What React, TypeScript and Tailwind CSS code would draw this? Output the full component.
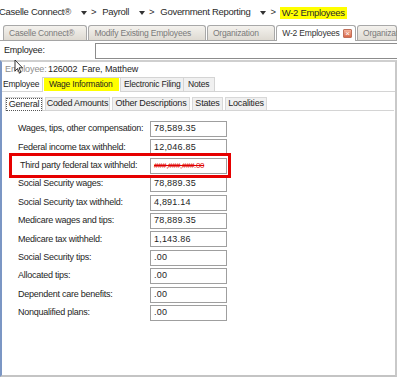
import React from 'react';

type Field = { label: string; value: string; flagged?: boolean };

const fields: Field[] = [
  { label: 'Wages, tips, other compensation:', value: '78,589.35' },
  { label: 'Federal income tax withheld:', value: '12,046.85' },
  { label: 'Third party federal tax withheld:', value: '###,###,###.00', flagged: true },
  { label: 'Social Security wages:', value: '78,889.35' },
  { label: 'Social Security tax withheld:', value: '4,891.14' },
  { label: 'Medicare wages and tips:', value: '78,889.35' },
  { label: 'Medicare tax withheld:', value: '1,143.86' },
  { label: 'Social Security tips:', value: '.00' },
  { label: 'Allocated tips:', value: '.00' },
  { label: 'Dependent care benefits:', value: '.00' },
  { label: 'Nonqualified plans:', value: '.00' },
];

const topTabs = [
  { label: 'Caselle Connect®', w: 'w-[89px]' },
  { label: 'Modify Existing Employees', w: 'w-[124px]' },
  { label: 'Organization', w: 'w-[72px]' },
];

const subTabs = [
  { label: 'Coded Amounts', w: 'w-[65px]' },
  { label: 'Other Descriptions', w: 'w-[78px]' },
  { label: 'States', w: 'w-[31px]' },
  { label: 'Localities', w: 'w-[42px]' },
];

// petit triangle du fil d'ariane
const Caret = () => (
  <svg width="6" height="4" viewBox="0 0 6 4" className="ml-[10px]">
    <path d="M0 0 L6 0 L3 4 Z" fill="#333" />
  </svg>
);

const Crumb: React.FC<{ children: React.ReactNode }> = ({ children }) => (
  <>
    <Caret />
    <span className="ml-[4px]">&gt;</span>
    <span className="ml-[6px]">{children}</span>
  </>
);

const App: React.FC = () => {
  return (
    <div className="relative w-[397px] h-[377px] overflow-hidden bg-white font-['Liberation_Sans',Arial,sans-serif] text-[#1e1e1e]">
      {/* fil d'ariane */}
      <div className="flex items-center h-[25px] text-[9.5px] tracking-[-0.3px] whitespace-nowrap text-[#2a2a2a]">
        <span className="ml-[-1px]">Caselle Connect®</span>
        <Crumb>Payroll</Crumb>
        <Crumb>Government Reporting</Crumb>
        <Caret />
        <span className="ml-[4px]">&gt;</span>
        <span className="ml-[4px] bg-[#ffff00] px-[2px] leading-[12px]">W-2 Employees</span>
      </div>

      {/* onglets principaux */}
      <div className="flex items-end h-[16px] pl-[3px] border-b border-[#a5a5a5] text-[8.5px] tracking-[-0.2px] whitespace-nowrap">
        {topTabs.map((t) => (
          <div
            key={t.label}
            className={`${t.w} h-[15px] mr-[1px] flex items-center pl-[5px] rounded-t-[3px] border border-b-0 border-[#a8a8a8] bg-gradient-to-b from-[#f4f2ee] to-[#dedad2] text-[#7a7a7a]`}
          >
            {t.label}
          </div>
        ))}
        <div className="w-[84px] h-[16px] mr-[1px] -mb-px flex items-center pl-[5px] rounded-t-[3px] border border-b-0 border-[#a8a8a8] bg-white text-[#333]">
          <span>W-2 Employees</span>
          <span className="ml-auto mr-[3px] w-[9px] h-[9px] flex items-center justify-center rounded-[1px] border border-[#c0705a] bg-gradient-to-b from-[#f5b49c] to-[#d9694a] text-white text-[8px] leading-none">
            ×
          </span>
        </div>
        <div className="w-[40px] h-[15px] flex items-center pl-[5px] rounded-t-[3px] border border-b-0 border-[#a8a8a8] bg-gradient-to-b from-[#f4f2ee] to-[#dedad2] text-[#7a7a7a]">
          Organization
        </div>
      </div>

      {/* recherche employé */}
      <div className="flex items-center h-[19px] text-[9px] tracking-[-0.2px]">
        <span className="ml-[4px] w-[91px]">Employee:</span>
        <div className="flex-1 h-[16px] border border-[#8c8c8c] border-r-0 bg-white" />
      </div>

      {/* cadre inférieur */}
      <div className="h-[317px] border-t-2 border-[#cfcfcf] border-l-2 border-l-[#7b96c4] border-r-2 border-r-[#c9c9c9] border-b-2 border-b-[#c4c4c4] flex flex-col">
        <div className="flex items-center h-[15px] text-[9px] tracking-[-0.1px] whitespace-nowrap">
          <span className="ml-[3px] w-[43px] text-[#8d8d8d]">Employee:</span>
          <span className="w-[34px]">126002</span>
          <span>Fare, Matthew</span>
        </div>

        {/* onglets employé */}
        <div className="flex items-end h-[15px] border-b border-[#d4d4d4] text-[8.5px] tracking-[-0.2px] whitespace-nowrap">
          <div className="w-[40px] h-[14px] flex items-center pl-[1px]">Employee</div>
          <div className="w-[79px] h-[15px] -mb-px flex items-start border border-b-0 border-[#d4d4d4] bg-white">
            <span className="ml-[1px] w-[75px] h-[13px] bg-[#ffff00] flex items-center pl-[5px]">Wage Information</span>
          </div>
          <div className="w-[63px] h-[14px] flex items-center pl-[3px] border border-l-0 border-b-0 border-[#d4d4d4] bg-[#f0f0f0]">
            Electronic Filing
          </div>
          <div className="w-[31px] h-[14px] flex items-center pl-[4px] border border-l-0 border-b-0 border-[#d4d4d4] bg-[#f0f0f0]">
            Notes
          </div>
        </div>

        {/* sous-onglets */}
        <div className="mt-[5px] ml-[3px] mr-[1px] flex items-end h-[14px] border-b border-[#d4d4d4] text-[9px] tracking-[-0.2px] whitespace-nowrap">
          <div className="w-[38px] h-[14px] -mb-px flex items-center justify-center border border-b-0 border-[#d4d4d4] bg-white">
            <span className="px-[2px] leading-[11px] border border-dotted border-[#555]">General</span>
          </div>
          {subTabs.map((t) => (
            <div
              key={t.label}
              className={`${t.w} h-[13px] ml-[2px] flex items-center justify-center border border-b-0 border-[#d8d8d8] bg-[#f0f0f0]`}
            >
              {t.label}
            </div>
          ))}
        </div>

        {/* champs */}
        <div className="relative mt-[10px] flex flex-col gap-[2.4px] text-[9px] tracking-[-0.25px]">
          {fields.map((f) => (
            <div key={f.label} className="flex items-center h-[16px]">
              <span className={f.flagged ? 'ml-[18px] w-[130px]' : 'ml-[16px] w-[132px]'}>{f.label}</span>
              <div className="w-[77px] h-[16px] flex items-center pl-[3px] border border-[#9f9f9f] bg-white">
                {f.flagged ? (
                  <span className="text-[#e00000] text-[8px] tracking-[-0.4px] line-through">{f.value}</span>
                ) : (
                  <span className="tracking-[0.2px]">{f.value}</span>
                )}
              </div>
            </div>
          ))}
          {/* encadré rouge */}
          <div className="absolute left-[7px] top-[32px] w-[222px] h-[25px] border-[3px] border-[#e60000]" />
        </div>
      </div>

      {/* curseur souris */}
      <svg className="absolute left-[14px] top-[59px]" width="10" height="15" viewBox="0 0 10 15">
        <path d="M1 1 L1 12 L3.5 9.5 L5.5 14 L7 13.3 L5 8.8 L8.5 8.8 Z" fill="white" stroke="#222" strokeWidth="0.9" strokeLinejoin="round" />
      </svg>
    </div>
  );
};

export default App;
